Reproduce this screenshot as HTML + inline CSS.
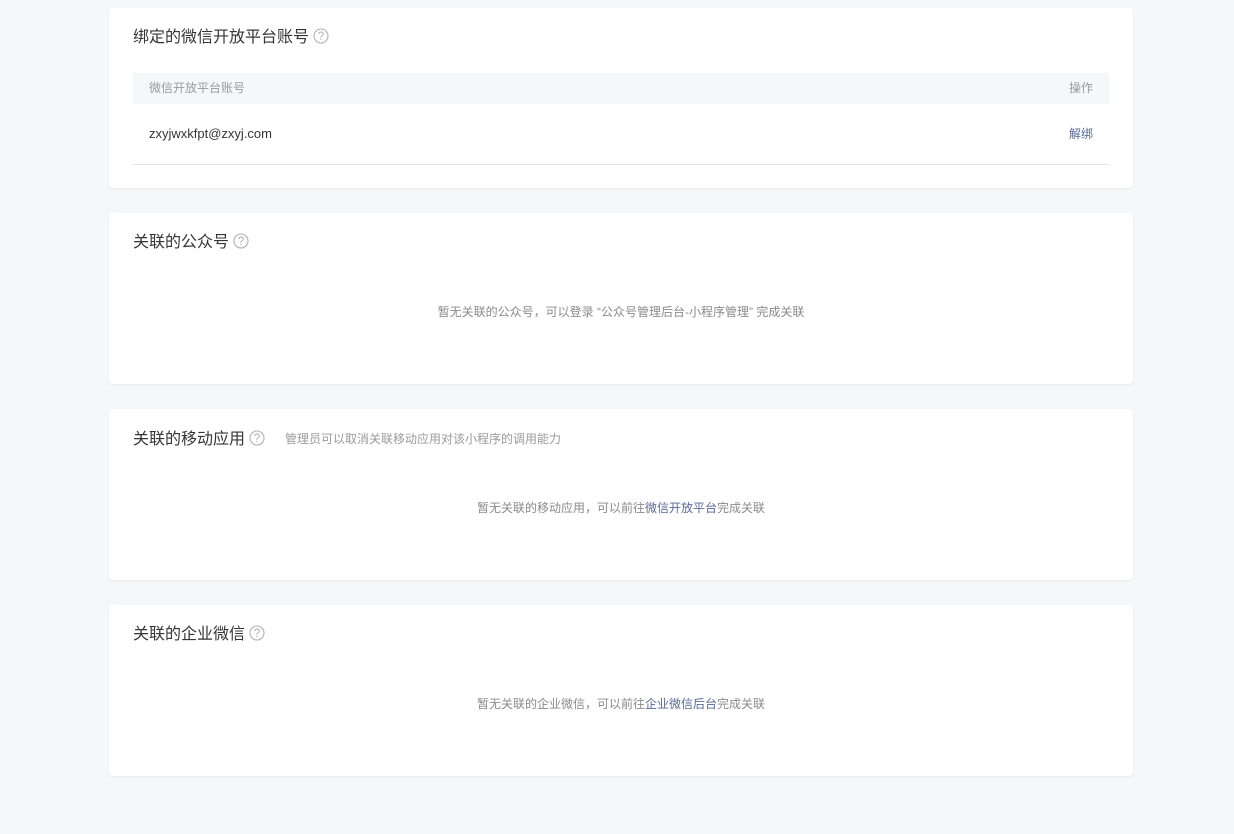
<!DOCTYPE html>
<html><head><meta charset="utf-8"><style>
body{margin:0;background:#f6f7f9;font-family:"Liberation Sans","Noto Sans CJK SC",sans-serif;width:1234px;height:834px;overflow:hidden;position:relative}
.card{position:absolute;left:109px;width:1024px;background:#fff;border-radius:4px;box-shadow:0 1px 2px rgba(0,0,0,0.06)}
.title{position:absolute;left:24px;top:19px;font-size:16px;color:#353535;line-height:22px;white-space:nowrap}
.q{display:inline-block;vertical-align:-2px;margin-left:4px}
.sub{font-size:12px;color:#9a9a9a;margin-left:20px;vertical-align:1px}
.empty{position:absolute;left:0;right:0;text-align:center;font-size:12px;color:#8a8a8a}
a{color:#576b95;text-decoration:none}
</style></head><body>
<div class="card" style="top:8px;height:180px">
 <div class="title">绑定的微信开放平台账号<svg class="q" width="16" height="16" viewBox="0 0 16 16"><circle cx="8" cy="8" r="7" fill="none" stroke="#b2b2b2" stroke-width="1.1"/><text x="8" y="12.2" font-size="11.5" text-anchor="middle" fill="#b2b2b2" font-family="Liberation Sans">?</text></svg></div>
 <div style="position:absolute;left:24px;right:24px;top:65px;height:31px;background:#f6f7f9;font-size:12px;color:#9a9a9a;line-height:31px">
  <span style="position:absolute;left:16px">微信开放平台账号</span><span style="position:absolute;right:16px">操作</span></div>
 <div style="position:absolute;left:24px;right:24px;top:96px;height:60px;border-bottom:1px solid #e5e5e5;font-size:13px;line-height:60px;color:#353535">
  <span style="position:absolute;left:16px">zxyjwxkfpt@zxyj.com</span><a style="position:absolute;right:16px;font-size:12px">解绑</a></div>
</div>
<div class="card" style="top:213px;height:171px">
 <div class="title">关联的公众号<svg class="q" width="16" height="16" viewBox="0 0 16 16"><circle cx="8" cy="8" r="7" fill="none" stroke="#b2b2b2" stroke-width="1.1"/><text x="8" y="12.2" font-size="11.5" text-anchor="middle" fill="#b2b2b2" font-family="Liberation Sans">?</text></svg></div>
 <div class="empty" style="top:90px">暂无关联的公众号，可以登录 “公众号管理后台-小程序管理” 完成关联</div>
</div>
<div class="card" style="top:409px;height:171px">
 <div class="title">关联的移动应用<svg class="q" width="16" height="16" viewBox="0 0 16 16"><circle cx="8" cy="8" r="7" fill="none" stroke="#b2b2b2" stroke-width="1.1"/><text x="8" y="12.2" font-size="11.5" text-anchor="middle" fill="#b2b2b2" font-family="Liberation Sans">?</text></svg><span class="sub">管理员可以取消关联移动应用对该小程序的调用能力</span></div>
 <div class="empty" style="top:90px">暂无关联的移动应用，可以前往<a>微信开放平台</a>完成关联</div>
</div>
<div class="card" style="top:605px;height:171px">
 <div class="title">关联的企业微信<svg class="q" width="16" height="16" viewBox="0 0 16 16"><circle cx="8" cy="8" r="7" fill="none" stroke="#b2b2b2" stroke-width="1.1"/><text x="8" y="12.2" font-size="11.5" text-anchor="middle" fill="#b2b2b2" font-family="Liberation Sans">?</text></svg></div>
 <div class="empty" style="top:90px">暂无关联的企业微信，可以前往<a>企业微信后台</a>完成关联</div>
</div>
</body></html>
